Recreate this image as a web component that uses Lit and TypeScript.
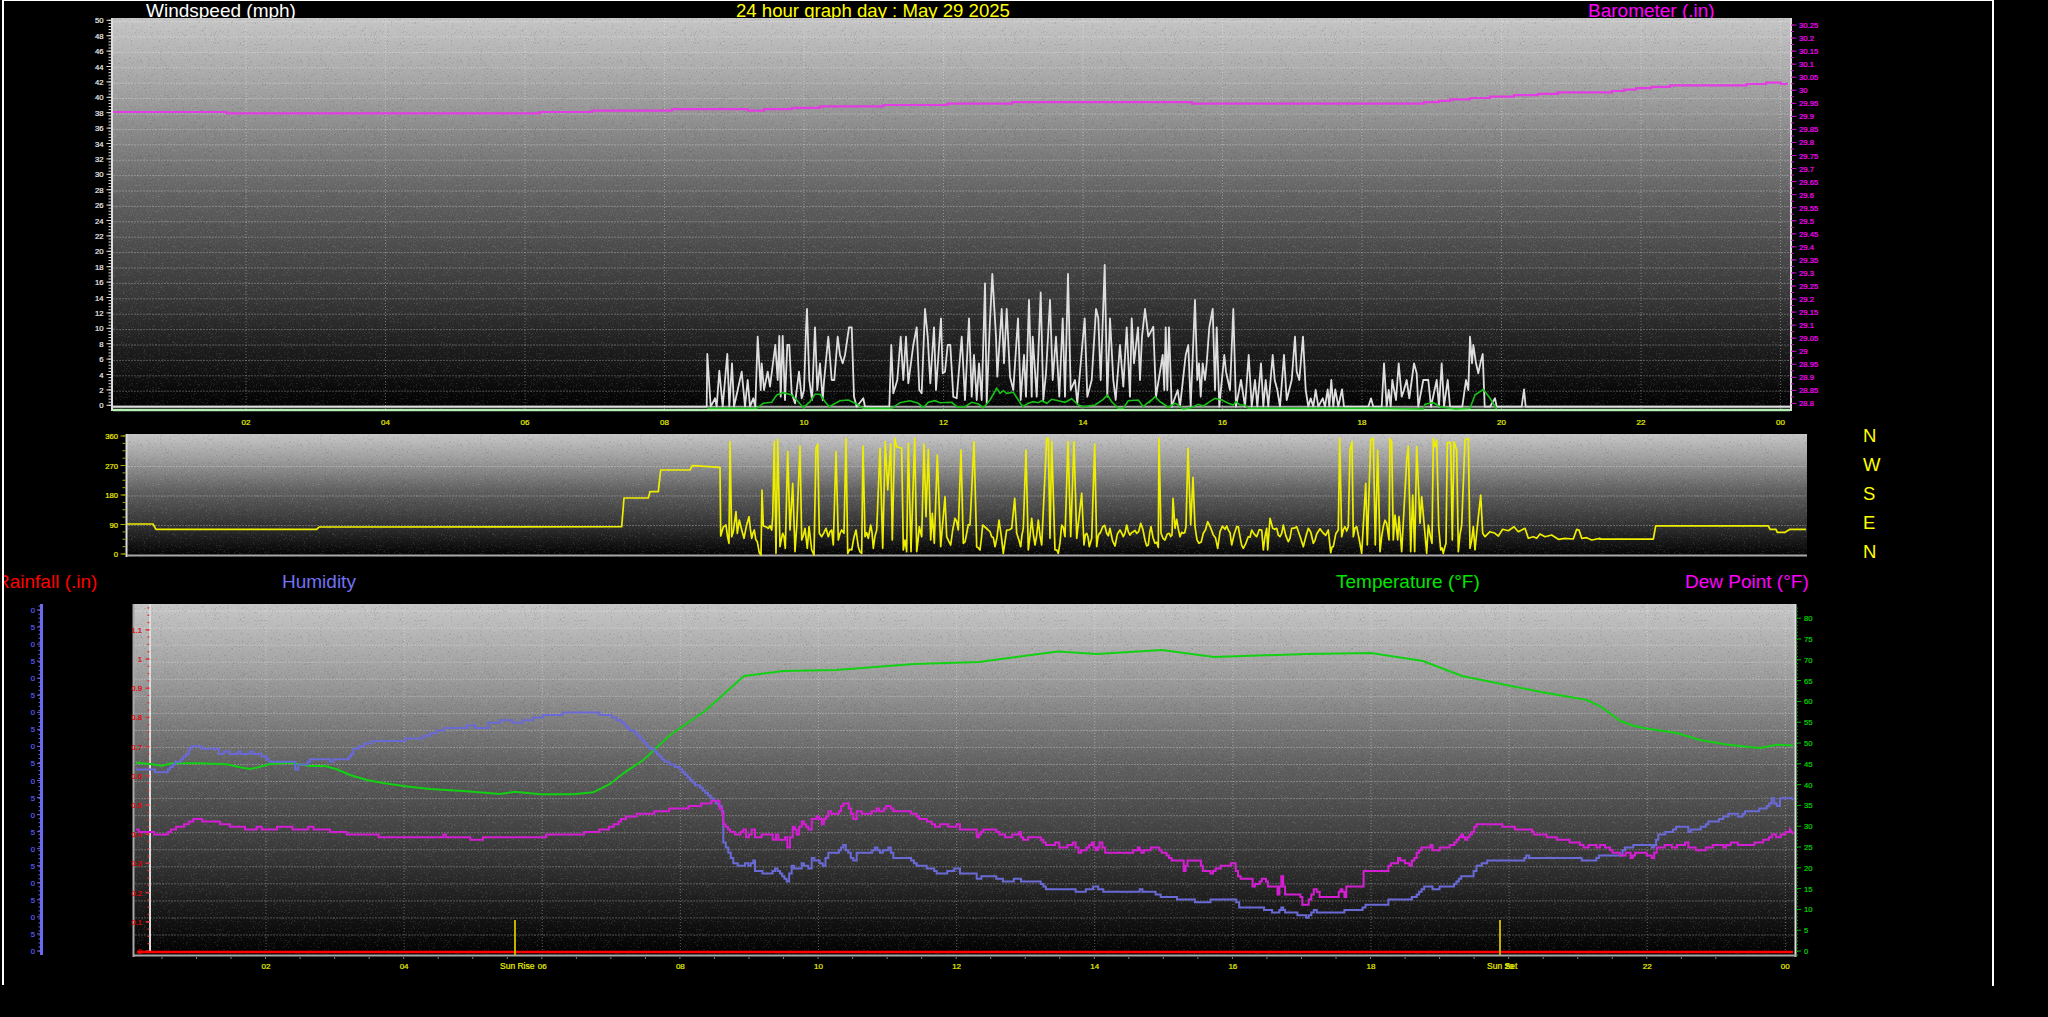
import { LitElement, html, svg, css } from "lit";
import { customElement } from "lit/decorators.js";

type P = [number, number];
const z = (raw: number[], ox: number, oy: number, sx = 3, sy = 3): P[] => {
  const out: P[] = [];
  for (let i = 0; i < raw.length; i += 2) out.push([ox + raw[i] / sx, oy + raw[i + 1] / sy]);
  return out;
};
const pts = (a: P[]) => a.map(([x, y]) => `${x.toFixed(1)},${y.toFixed(1)}`).join(" ");

let seed = 987654;
const rnd = () => ((seed = (seed * 1103515245 + 12345) & 0x7fffffff) / 0x7fffffff);

// sample a trace every `dx` px and snap it to rows, for the stair-stepped look of low-resolution readings
const stairs = (p: P[], dx: number, dy: number): P[] => {
  const out: P[] = [];
  let last = NaN;
  for (let i = 0; i < p.length - 1; i++) {
    const [x1, y1] = p[i], [x2, y2] = p[i + 1];
    const n = Math.max(1, Math.round((x2 - x1) / dx));
    for (let k = 0; k < n; k++) {
      const x = x1 + ((x2 - x1) * k) / n;
      const y = Math.round((y1 + ((y2 - y1) * k) / n) / dy) * dy;
      if (!isNaN(last) && y !== last) out.push([x, last]);
      out.push([x, y]);
      last = y;
    }
  }
  out.push(p[p.length - 1]);
  return out;
};

// add the fine wobble of the direction readings to long low-lying segments
const wobble = (p: P[], minY: number, amp: number): P[] => {
  const out: P[] = [];
  for (let i = 0; i < p.length - 1; i++) {
    const [x1, y1] = p[i], [x2, y2] = p[i + 1];
    out.push(p[i]);
    if (y1 > minY && y2 > minY && x2 - x1 > 2.5) {
      const mx = (x1 + x2) / 2, my = (y1 + y2) / 2;
      out.push([mx, my + (rnd() - 0.5) * amp]);
    }
  }
  out.push(p[p.length - 1]);
  return out;
};

const baro: P[] = ([[113,112],[150,111.5],[180,112],[246,113],[330,113.5],[385,114],[450,113],[500,114],[560,112],[620,110.5],[700,109.5],[760,110],[820,107],[915,105],[1000,103],[1100,102],[1200,103],[1306,103],[1420,103],[1450,100],[1490,97],[1530,95],[1570,92],[1600,93],[1640,88],[1670,86],[1700,86],[1735,85.5],[1770,83],[1788,83.5]] as P[]);

const wind: P[] = [
  [113, 406.7],
  ...z([0,530,170,530,172,372,182,530,195,505,200,530,208,422,218,530,232,372,238,530,246,400,252,530,275,425,285,530,293,450,300,530,310,505,316,530,323,320,332,480,335,400,342,480,353,425,360,470,376,345,383,450,388,318,392,500,398,318,405,510,412,345,418,345,425,490,435,520,447,425,455,505,462,480,468,300,471,237,478,450,486,510,495,292,502,480,510,400,518,510,522,455,535,320,545,450,553,450,563,320,570,375,578,400,585,375,597,292,605,292,612,500,620,530,640,505,645,530,718,530,724,345,730,490,742,450,752,320,760,450,768,320,775,460,790,345,800,292,808,480,815,490,825,237,833,320,841,460,852,292,858,480,873,265,878,430,885,425,893,345,901,345,910,500,920,505,935,320,945,510,957,265,965,500,972,375,980,510,987,400,995,510,1005,160,1010,520,1019,292,1027,132,1038,320,1042,440,1055,237,1062,400,1070,237,1080,440,1090,480,1104,265,1112,510,1122,375,1128,500,1137,210,1145,500,1148,320,1160,500,1172,187,1180,510,1188,430,1200,210,1208,450,1218,320,1228,500,1238,265,1245,500,1254,132,1262,480,1275,450,1282,520,1297,345,1304,265,1312,500,1325,450,1338,237,1345,265,1352,450,1364,105,1372,500,1380,265,1390,450,1397,510,1410,345,1420,470,1430,292,1440,500,1445,265,1452,400,1464,292,1470,450,1476,320,1485,237,1495,320], 650, 230),
  ...z([10,290,18,500,38,375,43,480,47,292,52,480,57,292,65,530,83,480,90,530,107,375,115,345,122,530,135,210,142,450,147,400,152,500,158,400,165,450,170,400,178,292,188,237,195,480,200,292,208,530,223,375,228,425,240,480,250,237,258,530,273,450,285,530,296,375,305,530,315,450,322,530,333,400,340,530,347,450,355,530,368,375,374,450,382,480,390,530,402,375,410,510,425,450,435,320,440,425,448,450,459,320,467,480,475,530,482,505,490,530,497,480,505,530,518,505,525,530,533,478,538,530,544,450,550,530,556,478,565,530,576,478,582,530,655,530,663,505,670,530,695,530,702,400,710,530,716,480,722,530,727,450,738,510,746,400,755,500,762,480,770,450,778,505,792,400,800,430,805,530,820,450,835,450,843,530,860,450,867,530,875,400,882,530,893,450,900,530,937,530,948,450,955,480,960,320,966,400,970,345,978,400,985,430,992,395,998,372,1004,530,1020,530,1035,505,1040,530,1115,530,1122,478,1127,530,1500,530], 1150, 230),
  [1790, 406.7],
];
const gust: P[] = [
  ...z([172,535,320,535,340,520,365,517,380,495,400,488,425,495,445,515,460,533,480,515,495,493,510,493,525,515,538,530,552,522,570,512,595,510,620,522,640,535,725,535,750,518,780,512,805,520,820,533,835,517,855,512,870,518,905,517,920,530,945,530,965,517,985,522,1000,533,1020,510,1040,475,1050,490,1060,482,1070,490,1090,487,1105,510,1118,530,1135,520,1150,515,1165,518,1175,512,1190,520,1205,508,1225,512,1245,517,1265,506,1285,525,1300,530,1335,525,1360,508,1372,495,1385,515,1405,535,1420,535,1435,512,1465,510,1480,530,1500,513], 650, 230),
  ...z([0,515,15,500,30,515,45,525,55,532,75,520,85,525,100,537,115,535,130,530,145,523,160,528,175,518,195,505,215,510,235,520,250,525,258,515,270,525,285,525,295,535,490,535,700,535,820,537,825,523,850,518,870,530,915,537,960,535,975,495,1000,478,1020,505,1040,537], 1150, 230),
];
const dirRaw: P[] = [
  ...z([362,318,378,285,387,340,390,35,395,320,400,305,408,245,412,310,418,270,425,300,432,325,447,260,455,325,463,300,472,335,483,375,486,180,490,288,505,295,515,300,518,260,523,35,528,370,533,28,540,350,548,310,556,355,563,65,570,300,578,160,585,365,590,290,600,48,605,330,615,295,622,355,627,290,635,360,642,375,648,55,653,42,658,310,665,320,678,295,685,320,695,300,700,345,708,65,715,330,725,300,732,310,738,25,743,370,755,360,768,300,775,350,785,370,789,48,795,320,805,325,812,285,820,355,830,300,840,55,848,355,856,35,863,180,872,42,877,330,884,25,890,50,905,55,910,360,915,330,920,365,925,40,933,365,944,25,950,365,958,290,965,320,972,42,978,260,985,58,992,330,997,250,1003,340,1012,75,1022,350,1035,200,1040,320,1052,345,1058,300,1065,265,1075,300,1083,60,1090,340,1100,310,1110,285,1122,35,1130,350,1140,360,1148,285,1165,300,1175,320,1185,350,1197,270,1210,370,1220,300,1235,295,1244,205,1250,310,1262,350,1270,295,1278,60,1285,360,1295,265,1305,345,1315,270,1325,345,1340,25,1345,25,1350,325,1355,35,1365,360,1375,370,1385,285,1395,320,1404,35,1412,320,1422,35,1430,325,1445,190,1452,345,1460,310,1468,350,1475,325,1484,42,1490,350,1498,310], 600, 430),
  ...z([0,310,8,290,20,310,30,295,45,348,60,300,70,320,80,285,90,315,100,305,110,310,122,280,135,330,145,345,153,290,165,340,175,352,177,25,183,310,195,330,208,310,216,315,219,205,225,295,230,268,240,320,250,310,258,290,264,55,272,285,279,142,285,290,297,340,310,310,323,275,340,315,353,355,360,305,375,298,385,300,395,345,410,290,420,320,430,355,445,320,455,300,470,320,485,300,490,360,500,295,503,360,510,265,518,295,530,295,540,320,550,285,565,335,575,295,590,290,610,350,625,295,640,340,650,312,670,310,685,300,692,368,700,350,715,300,719,25,725,320,735,290,745,290,750,60,756,35,760,320,770,290,785,370,797,160,802,345,812,30,820,25,826,345,833,60,840,365,850,290,860,280,867,330,870,25,875,35,880,330,885,255,893,330,897,260,905,365,920,90,925,48,932,365,938,195,944,365,950,50,955,160,960,280,965,200,980,370,985,285,996,340,1000,25,1005,50,1010,30,1016,290,1022,360,1030,370,1038,340,1042,38,1052,38,1057,330,1062,35,1070,60,1075,365,1085,285,1095,30,1105,25,1110,355,1120,290,1125,360,1132,290,1142,195,1148,310,1155,320], 1100, 430),
];
const dir: P[] = [
  [127,524],[153,524],[156,529.3],[316.7,529.3],[319,527],
  ...z([65,290,72,204,145,204,150,185,175,185,182,120,270,120,277,107,360,112], 600, 430),
  ...wobble(dirRaw, 515, 10),
  ...z([1170,305,1185,310,1195,318,1208,298,1225,302,1242,290,1255,305,1275,295,1285,325,1300,320,1310,325,1320,312,1335,320,1355,315,1375,328,1395,325,1420,327,1430,298,1437,300,1445,325,1460,323,1475,330,1500,325], 1100, 430),
  ...z([0,313,160,313,167,278,505,278,510,287,528,287,532,295,555,295,570,287,618,287], 1600, 420, 3, 2.626),
];
const temp: P[] = [
  ...z([408,458,450,462,485,467,515,460,600,460,680,463,720,472,750,477,775,472,810,462,870,458,930,468,975,468,1010,478,1050,495,1100,510,1150,519,1210,528,1290,537,1390,543,1500,552], 0, 610),
  ...z([0,102,45,95,120,103,220,103,280,97,330,72,370,40,430,0], 500, 760),
  [670,735],[705,711],[744,676],[783,671],[836,670],[914,664],[979,662],[1058,651.5],[1097,654],[1162,650],[1214,657],[1306,654],[1371,653],[1423,661],[1462,676],[1541,692],[1587,700],
  ...z([0,752,30,770,60,790,100,803,140,810,230,822,300,840,380,852,440,858,480,861,530,853,580,855], 1600, 420, 3, 2.626),
];
const hum: P[] = [
  ...z([408,477,440,480,450,476,465,488,497,488,510,470,550,440,575,405,595,410,620,420,640,413,652,413,657,430,680,425,690,432,715,428,730,432,750,427,760,433,785,437,800,450,820,457,875,457,885,475,895,460,915,460,930,447,980,447,990,456,1000,447,1040,447,1060,420,1085,405,1115,396,1205,396,1215,384,1260,384,1270,375,1305,372,1310,362,1340,354,1385,354,1415,345,1425,354,1455,354,1465,342,1490,340,1500,332], 0, 610),
  [520,722],[548,715],[587.5,711.5],[614,717],[640,737.6],
  ...z([485,0,540,25,570,60,600,85,640,120,665,150,670,245,700,310,720,320,735,310,745,320,760,305,765,335,810,340,825,327,840,340,860,368,875,320,895,325,905,312,925,325,935,297,950,300,968,315,985,280,1010,280,1030,255,1060,305,1070,280,1100,280,1125,265,1140,278,1165,265,1180,295,1225,295,1250,315,1295,325,1310,338,1335,338,1370,325,1380,338,1425,340,1430,355,1480,345,1498,360], 500, 760),
  ...z([0,360,15,368,50,355,60,368,100,368,120,388,190,390,205,398,250,380,270,395,290,398,360,398,365,390,400,398,420,410,450,412,475,420,530,425,610,415,625,440,655,442,690,447,725,460,735,440,745,461,790,462,800,473,820,452,835,461,885,461,900,452,940,452,955,432,1010,432,1015,420,1070,420,1095,395,1115,378,1130,388,1180,376,1205,348,1230,348,1245,320,1280,298,1365,298,1375,285,1390,297,1515,297,1525,305,1545,305,1565,290], 1000, 760, 2.613, 3),
  ...z([0,1143,60,1140,75,1125,100,1118,150,1118,155,1125,175,1090,210,1082,228,1065,255,1065,265,1080,310,1070,325,1055,350,1055,370,1040,400,1035,420,1040,435,1025,470,1025,500,1015,515,995,530,1015,540,995,575,990,580,997], 1600, 420, 3, 2.626),
];
const dew: P[] = [
  ...z([408,662,440,668,455,668,470,675,497,675,520,655,545,650,580,627,600,630,620,638,650,632,660,640,690,648,720,648,735,657,770,654,800,655,870,653,885,660,905,658,925,654,980,656,990,665,1015,665,1040,672,1100,672,1150,680,1210,681,1270,685,1330,677,1390,683,1425,688,1465,683,1495,678], 0, 610),
  ...z([0,230,50,235,130,228,230,223,320,208,370,175,410,165,530,145,580,140,650,120,667,165,670,195,705,225,730,210,738,235,755,205,765,235,785,225,810,225,818,240,828,220,835,238,855,235,862,262,878,200,890,220,905,185,925,210,935,180,950,170,965,190,985,155,1010,165,1030,130,1040,130,1060,180,1070,150,1100,165,1130,145,1145,155,1165,135,1180,155,1225,155,1250,170,1295,190,1305,200,1335,190,1345,203,1370,195,1380,205,1425,210,1430,232,1450,208,1480,210,1498,222], 500, 760),
  ...z([0,222,20,232,50,218,60,238,100,230,120,258,150,248,155,265,190,250,205,278,240,250,250,270,260,250,275,280,295,275,330,282,360,265,370,278,400,260,410,265,435,285,455,305,475,305,480,330,490,300,520,305,530,330,550,340,570,322,610,310,622,352,655,355,660,378,690,355,700,380,720,378,725,402,735,352,745,400,785,408,790,432,800,435,820,385,835,410,880,410,890,385,900,408,905,380,945,378,950,335,1010,335,1015,315,1035,310,1040,295,1070,315,1095,268,1125,258,1130,272,1175,258,1205,225,1215,240,1245,195,1280,190,1365,210,1385,205,1395,220,1515,252,1525,262,1545,255,1565,265], 1000, 760, 2.613, 3),
  ...z([0,1115,30,1130,60,1143,85,1135,92,1150,105,1135,140,1140,155,1150,170,1125,210,1115,215,1125,255,1110,265,1125,310,1128,345,1115,370,1120,400,1110,420,1115,470,1112,490,1105,515,1090,535,1095,570,1078,580,1087], 1600, 420, 3, 2.626),
];

const range = (n: number) => Array.from({ length: n }, (_, i) => i);
const hh = (h: number) => String(h % 24).padStart(2, "0");

// speckle tile: a seeded scatter of 1px dots that reads as the GIF dither of the plot backgrounds
const speckle = () => {
  let s = 1234567;
  const r = () => ((s = (s * 1103515245 + 12345) & 0x7fffffff) / 0x7fffffff);
  const cols = ["#ffffff", "#000000", "#c89ac8", "#8fb08f", "#ffffff", "#000000"];
  return range(3000).map(() => {
    const x = Math.floor(r() * 160), y = Math.floor(r() * 96), c = cols[Math.floor(r() * 6)];
    return svg`<rect x=${x} y=${y} width="1" height="1" fill=${c}></rect>`;
  });
};

const hLine = (x1: number, x2: number, y: number, cls: string) =>
  svg`<line class=${cls} x1=${x1} x2=${x2} y1=${y} y2=${y}></line>`;
const vLine = (x: number, y1: number, y2: number, cls: string) =>
  svg`<line class=${cls} x1=${x} x2=${x} y1=${y1} y2=${y2}></line>`;
const label = (x: number, y: number, t: string, cls: string) =>
  svg`<text class=${cls} x=${x} y=${y}>${t}</text>`;
const trace = (p: P[], cls: string) => svg`<polyline class=${cls} points=${pts(p)}></polyline>`;

@customElement("app-root")
export class AppRoot extends LitElement {
  static styles = css`
    :host { display: block; width: 2048px; height: 1017px; background: #000; overflow: hidden; }
    svg { display: block; }
    text { font-family: "Liberation Sans", Arial, sans-serif; font-size: 7.7px; stroke-width: .2px; }
    .title { font-size: 19px; stroke-width: 0; }
    .date { font-size: 18.6px; stroke-width: 0; }
    .compass { font-size: 18.5px; fill: #ffff00; stroke-width: 0; }
    .white { fill: #ffffff; }
    .yellow { fill: #ffff00; }
    .magenta { fill: #ff00ff; }
    .red { fill: #ff0000; }
    .blue { fill: #7272f4; }
    .green { fill: #00e600; }
    .wlab { fill: #eeeeee; stroke: #eeeeee; text-anchor: end; }
    .ylab { fill: #f0f000; stroke: #f0f000; text-anchor: end; }
    .rlab { fill: #e00000; stroke: #e00000; text-anchor: end; }
    .blab { fill: #5e5ef0; stroke: #5e5ef0; text-anchor: end; }
    .mlab { fill: #ff00ff; stroke: #ff00ff; }
    .glab { fill: #00d800; stroke: #00d800; }
    .xlab { fill: #e8f000; stroke: #e8f000; text-anchor: middle; font-size: 8px; }
    .sun { fill: #e8f000; stroke: #e8f000; font-size: 8.5px; }
    line, polyline { fill: none; }
    .frame { stroke: #fff; stroke-width: 2; }
    .frame-top { stroke: #fff; stroke-width: 1; }
    .gh { stroke: rgba(255,255,255,.26); stroke-width: 1; stroke-dasharray: 2 1; }
    .gv { stroke: rgba(255,255,255,.34); stroke-width: 1; stroke-dasharray: 1 2; }
    .ax-w { stroke: #dcdcdc; stroke-width: 2; }
    .ax-g { stroke: #a8a8a8; stroke-width: 2; }
    .ax-lg { stroke: #b4f0b4; stroke-width: 2.4; }
    .tw { stroke: #dddddd; stroke-width: 1; }
    .tm { stroke: #c010c0; stroke-width: 1; }
    .ty { stroke: #a8a800; stroke-width: 1; }
    .tr { stroke: #e03030; stroke-width: 1.4; }
    .tb { stroke: #6a6ae0; stroke-width: 1; }
    .tg { stroke: #00b000; stroke-width: 1; }
    .tx { stroke: #808080; stroke-width: 1; }
    .ax-b { stroke: #6a6af0; stroke-width: 3; }
    .ln-baro { stroke: #e23ce2; stroke-width: 2.2; }
    .ln-wind { stroke: #dedede; stroke-width: 1.8; stroke-linejoin: round; }
    .ln-base { stroke: #a8a8a8; stroke-width: 2; }
    .ln-gust { stroke: #18c018; stroke-width: 1.6; }
    .ln-dir { stroke: #eeee00; stroke-width: 1.7; stroke-linejoin: round; }
    .ln-temp { stroke: #12d012; stroke-width: 2; }
    .ln-hum { stroke: #6a6ad6; stroke-width: 2; }
    .ln-dew { stroke: #d41ed4; stroke-width: 2; }
    .ln-rain { stroke: #ff0000; stroke-width: 2.4; }
    .ln-sun { stroke: #c2b200; stroke-width: 2; }
    .sp { opacity: .1; }
  `;

  private chart1() {
    const yW = (i: number) => 20.3 + i * 15.4;
    const xH = (h: number) => 246 + (h - 2) * 69.75;
    return svg`
      <rect x="112" y="18" width="1680" height="393" fill="url(#bg)"></rect>
      <rect class="sp" x="112" y="18" width="1680" height="393" fill="url(#spk)"></rect>
      ${range(25).map((i) => hLine(113, 1791, yW(i) + 1.3, "gh"))}
      ${range(12).map((i) => vLine(xH(2 + i * 2), 18, 409, "gv"))}
      ${vLine(112, 18, 411, "ax-w")} ${vLine(1791, 18, 411, "ax-w")}
      ${range(126).map((i) => hLine(108.5, 111, 20.3 + i * 3.08, "tw"))}
      ${range(26).map((i) => hLine(106.5, 111, yW(i), "tw"))}
      ${range(26).map((i) => label(103.5, yW(i) + 3, String(50 - i * 2), "wlab"))}
      ${range(59).map((i) => hLine(1791, 1794, 25 + i * 6.525, "tm"))}
      ${range(30).map((i) => hLine(1792, 1796.5, 25 + i * 13.05, "tm"))}
      ${range(30).map((i) => {
        const v = (30.25 - i * 0.05).toFixed(2).replace(/0+$/, "").replace(/\.$/, "");
        return label(1799, 25 + i * 13.05 + 3, v, "mlab");
      })}
      ${trace(stairs(baro, 4, 1.4), "ln-baro")}
      ${hLine(113, 1790, 406.7, "ln-base")}
      ${trace(wind, "ln-wind")}
      ${hLine(113, 1790, 410, "ax-lg")}
      ${trace(gust, "ln-gust")}
      ${range(12).map((i) => label(xH(2 + i * 2), 424.5, hh(2 + i * 2), "xlab"))}
    `;
  }

  private chart2() {
    const y = (i: number) => 436 + i * 29.5;
    return svg`
      <rect x="127" y="434" width="1680" height="123" fill="url(#bg)"></rect>
      <rect class="sp" x="127" y="434" width="1680" height="123" fill="url(#spk)"></rect>
      ${range(3).map((i) => hLine(128, 1806, y(i + 1) + 1, "gh"))}
      ${vLine(126.5, 434, 557, "ax-w")} ${hLine(127, 1807, 555.5, "ax-g")}
      ${range(17).map((i) => hLine(122.5, 125.5, 436 + i * 7.375, "ty"))}
      ${range(5).map((i) => hLine(120.5, 125.5, y(i), "ty"))}
      ${range(5).map((i) => label(118, y(i) + 3, String(360 - i * 90), "ylab"))}
      ${trace(dir, "ln-dir")}
    `;
  }

  private chart3() {
    const xH = (h: number) => 266 + (h - 2) * 69.06;
    return svg`
      <rect x="134" y="604" width="1662" height="352" fill="url(#bg)"></rect>
      <rect class="sp" x="134" y="604" width="1662" height="352" fill="url(#spk)"></rect>
      ${range(20).map((i) => hLine(135, 1795, 935 - i * 17.05, "gh"))}
      ${range(12).map((i) => vLine(xH(2 + i * 2), 604, 954, "gv"))}
      ${vLine(133.5, 604, 957, "ax-g")} ${vLine(1795.5, 604, 957, "ax-w")}
      ${vLine(150, 604, 952, "ax-w")}
      ${range(48).map((i) => hLine(147.5, 149.3, 951 - i * 7.3, "tr"))}
      ${range(12).map((i) => hLine(145.5, 149.3, 951 - i * 29.2, "tr"))}
      ${range(12).map((i) => {
        const v = (i / 10).toFixed(1).replace(/\.0$/, "");
        return label(142, 951 - i * 29.2 + 3, v, "rlab");
      })}
      ${vLine(41.5, 604, 955, "ax-b")}
      ${range(87).map((i) => hLine(38.5, 40.5, 951 - i * 4.01, "tb"))}
      ${range(21).map((i) => hLine(37, 40.5, 951 - i * 17.05, "tb"))}
      ${range(21).map((i) => label(35, 951 - i * 17.05 + 3, i % 2 ? "5" : "0", "blab"))}
      ${range(101).map((i) => hLine(1796.5, 1798, 955 - i * 3.47, "tg"))}
      ${range(17).map((i) => hLine(1796.5, 1801, 951 - i * 20.8, "tg"))}
      ${range(17).map((i) => label(1804, 951 - i * 20.8 + 3, String(i * 5), "glab"))}
      ${trace(temp, "ln-temp")}
      ${trace(stairs(hum, 2.5, 2.6), "ln-hum")}
      ${trace(stairs(dew, 2.5, 2.6), "ln-dew")}
      ${hLine(137, 1793, 952, "ln-rain")}
      ${hLine(134, 1796, 955.5, "ax-g")}
      ${vLine(515, 920, 955, "ln-sun")} ${vLine(1500, 920, 955, "ln-sun")}
      ${range(46).map((i) => vLine(162 + i * 34.53, 957, 959, "tx"))}
      ${range(12).map((i) => label(xH(2 + i * 2), 969, hh(2 + i * 2), "xlab"))}
      ${label(500, 969, "Sun Rise", "sun")} ${label(1487, 969, "Sun Set", "sun")}
    `;
  }

  render() {
    return html`<svg width="2048" height="1017" viewBox="0 0 2048 1017" role="img" aria-label="24 hour weather graph for May 29 2025">
      <defs>
        <linearGradient id="bg" x1="0" y1="0" x2="0" y2="1">
          <stop offset="0" stop-color="#c6c6c6"></stop>
          <stop offset=".22" stop-color="#9a9a9a"></stop>
          <stop offset=".46" stop-color="#606060"></stop>
          <stop offset=".7" stop-color="#3a3a3a"></stop>
          <stop offset=".85" stop-color="#1c1c1c"></stop>
          <stop offset="1" stop-color="#000000"></stop>
        </linearGradient>
        <pattern id="spk" width="160" height="96" patternUnits="userSpaceOnUse" shape-rendering="crispEdges">${speckle()}</pattern>
      </defs>

      ${label(146, 16.5, "Windspeed (mph)", "title white")}
      ${label(736, 16.5, "24 hour graph day : May 29 2025", "date yellow")}
      ${label(1588, 16.5, "Barometer (.in)", "title magenta")}
      ${label(-4, 588, "Rainfall (.in)", "title red")}
      ${label(282, 588, "Humidity", "title blue")}
      ${label(1336, 588, "Temperature (°F)", "title green")}
      ${label(1685, 588, "Dew Point (°F)", "title magenta")}

      ${this.chart1()}
      ${this.chart2()}
      ${this.chart3()}

      ${["N", "W", "S", "E", "N"].map((c, i) => label(1863, 442 + i * 29.1, c, "compass"))}

      <rect x="0" y="0" width="3" height="1017" fill="#000"></rect>
      ${hLine(2, 1994, 0.5, "frame-top")}
      ${vLine(3, 0, 985, "frame")}
      ${vLine(1993, 0, 986, "frame")}
    </svg>`;
  }
}
